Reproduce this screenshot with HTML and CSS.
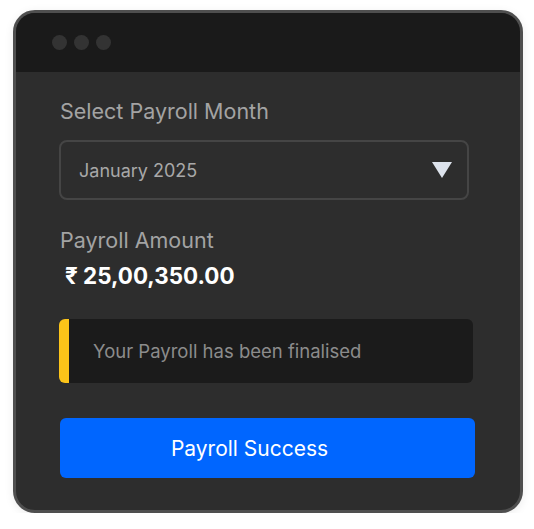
FILE: index.html
```html
<!DOCTYPE html>
<html>
<head>
<meta charset="utf-8">
<link rel="stylesheet" href="styles.css">
</head>
<body>
<div class="window">
  <div class="titlebar">
    <span class="dot"></span><span class="dot"></span><span class="dot"></span>
  </div>
  <div class="content">
    <div class="label">Select Payroll Month</div>
    <div class="select">
      <span class="select-value">January 2025</span>
      <span class="caret"></span>
    </div>
    <div class="label amount-label">Payroll Amount</div>
    <div class="amount">₹ 25,00,350.00</div>
    <div class="alert">Your Payroll has been finalised</div>
    <button class="btn">Payroll Success</button>
  </div>
</div>
</body>
</html>
```
FILE: styles.css
```css
html, body {
  margin: 0;
  padding: 0;
  background: #ffffff;
  font-family: Inter, "Noto Sans", sans-serif;
}
.window {
  margin: 10px 0 0 13px;
  width: 510px;
  height: 503px;
  box-sizing: border-box;
  border: 3px solid #4f4f4f;
  border-radius: 22px;
  overflow: hidden;
  background: #2d2d2d;
  box-shadow: 0 2px 10px rgba(0,0,0,0.08);
}
.titlebar {
  height: 59px;
  background: #1a1a1a;
  display: flex;
  align-items: center;
  gap: 7px;
  padding-left: 36px;
  box-sizing: border-box;
}
.dot {
  width: 15px;
  height: 15px;
  border-radius: 50%;
  background: #333333;
}
.content {
  padding: 26px 0 0 43px;
  display: flex;
  flex-direction: column;
  align-items: flex-start;
}
.label {
  font-size: 21.5px;
  line-height: 26px;
  color: #a3a3a3;
  padding-left: 1px;
}
.select {
  margin-top: 16px;
  width: 410px;
  height: 60px;
  box-sizing: border-box;
  border: 2px solid #454545;
  border-radius: 8px;
  display: flex;
  align-items: center;
  justify-content: space-between;
  padding: 0 15px 0 18px;
}
.select-value {
  font-size: 18px;
  color: #a8a8a8;
}
.caret {
  width: 0;
  height: 0;
  border-left: 10px solid transparent;
  border-right: 10px solid transparent;
  border-top: 16px solid #dde3ec;
}
.amount-label {
  margin-top: 27px;
}
.amount {
  margin-top: 10px;
  padding-left: 6px;
  font-size: 22.4px;
  line-height: 26px;
  font-weight: 700;
  color: #ffffff;
}
.alert {
  margin-top: 30px;
  width: 414px;
  height: 64px;
  box-sizing: border-box;
  background: #1b1b1b;
  border-left: 10px solid #fcc419;
  border-radius: 6px;
  display: flex;
  align-items: center;
  padding-left: 24px;
  font-size: 18.5px;
  color: #8c8c8c;
}
.btn {
  margin-top: 35px;
  margin-left: 1px;
  width: 415px;
  height: 60px;
  border: none;
  border-radius: 6px;
  background: #0066ff;
  color: #ffffff;
  font-family: Inter, "Noto Sans", sans-serif;
  font-size: 21px;
  padding: 0 36px 0 0;
}
```
